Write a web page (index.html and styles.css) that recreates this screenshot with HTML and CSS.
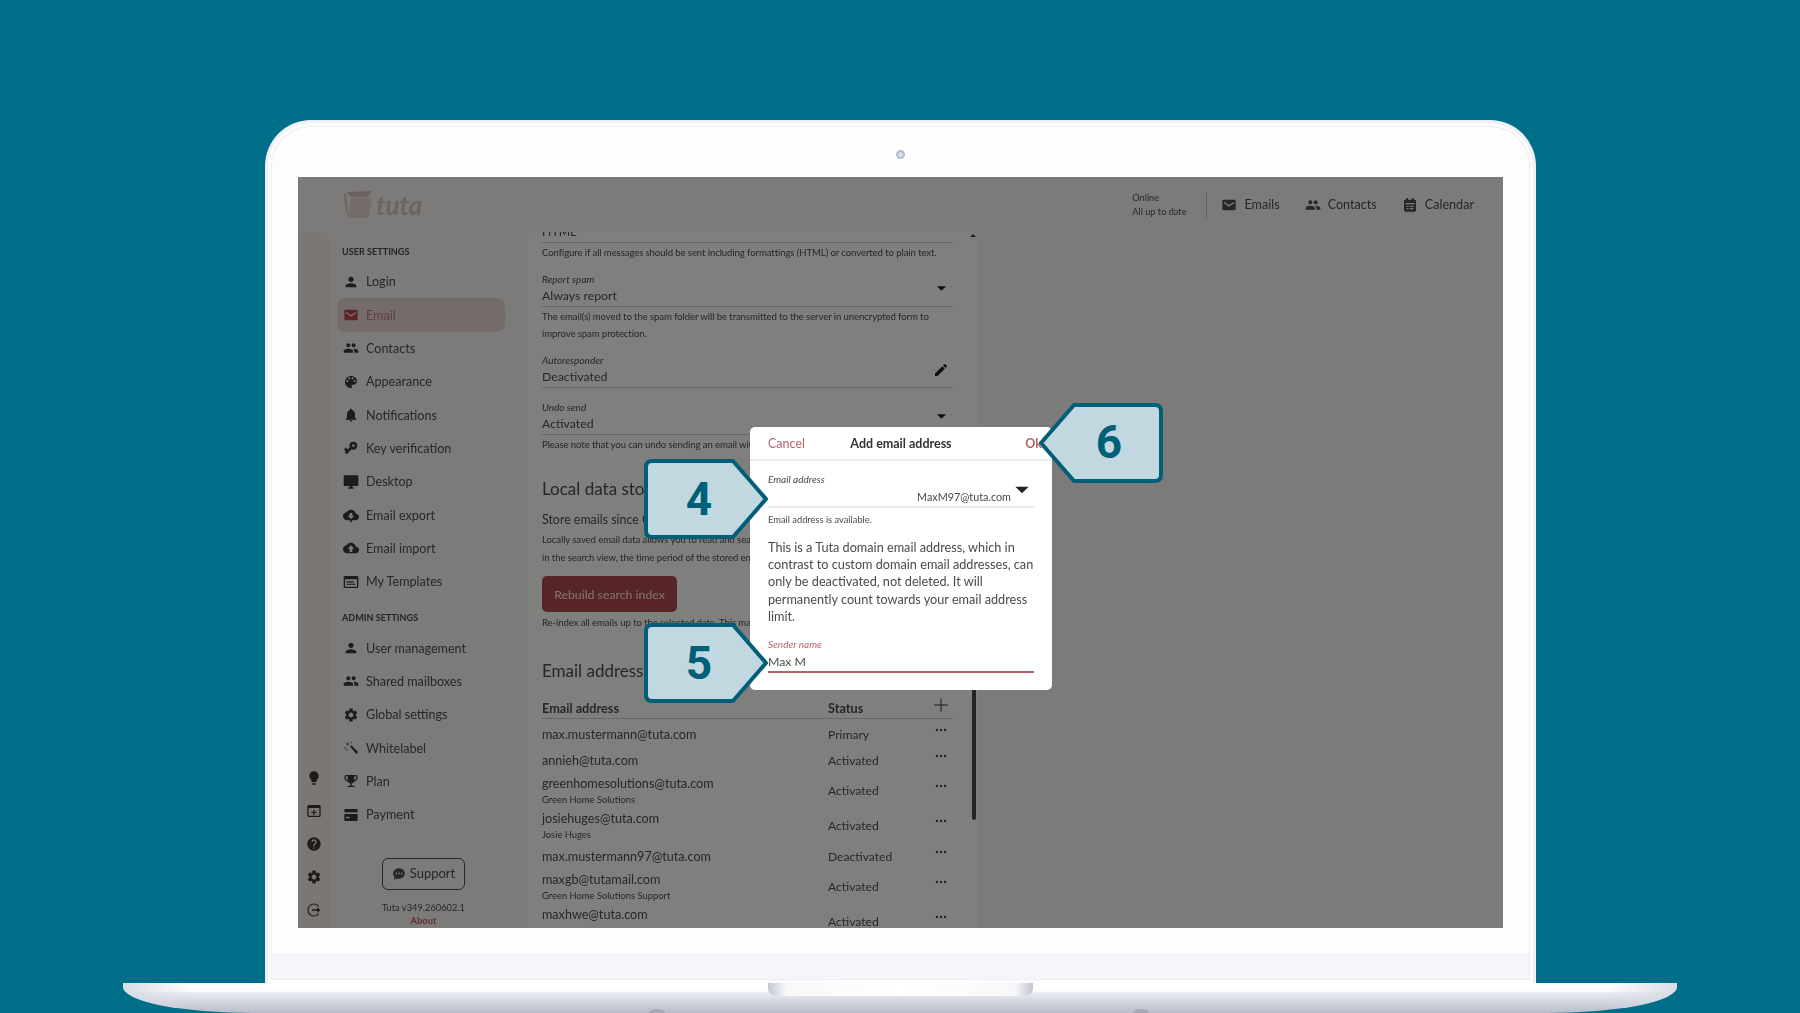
FILE: index.html
```html
<!DOCTYPE html>
<html lang="en">
<head>
    <meta charset="UTF-8">
    <meta name="viewport" content="width=device-width, initial-scale=1.0">
    <title>Add email address</title>
    <link rel="stylesheet" href="styles.css">
</head>
<body>

    <!-- icon sprite -->
    <svg class="sprite" width="0" height="0">
        <symbol id="i-person" viewBox="0 0 24 24"><path d="M12 12c2.21 0 4-1.79 4-4s-1.79-4-4-4-4 1.79-4 4 1.79 4 4 4zm0 2c-2.67 0-8 1.34-8 4v2h16v-2c0-2.66-5.33-4-8-4z"/></symbol>
        <symbol id="i-mail" viewBox="0 0 24 24"><path d="M4 4h16a2 2 0 0 1 2 2v12a2 2 0 0 1-2 2H4a2 2 0 0 1-2-2V6a2 2 0 0 1 2-2zm1.2 3.4L4 8.9l8 5.6 8-5.6-1.2-1.5L12 12.100z" fill-rule="evenodd"/></symbol>
        <symbol id="i-people" viewBox="0 0 24 24"><path d="M16 11c1.66 0 2.99-1.34 2.99-3S17.66 5 16 5c-1.66 0-3 1.34-3 3s1.34 3 3 3zm-8 0c1.66 0 2.99-1.34 2.99-3S9.66 5 8 5C6.34 5 5 6.34 5 8s1.34 3 3 3zm0 2c-2.33 0-7 1.17-7 3.5V19h14v-2.500c0-2.330-4.670-3.500-7-3.500zm8 0c-.29 0-.62.02-.97.05 1.160.84 1.970 1.970 1.970 3.450V19h6v-2.500c0-2.330-4.670-3.500-7-3.500z"/></symbol>
        <symbol id="i-palette" viewBox="0 0 24 24"><path d="M12 3c-4.970 0-9 4.030-9 9s4.030 9 9 9c.83 0 1.500-.67 1.500-1.500 0-.39-.15-.74-.39-1.010-.23-.26-.38-.61-.38-.99 0-.83.67-1.500 1.500-1.500H16c2.760 0 5-2.240 5-5 0-4.420-4.030-8-9-8zm-5.500 9c-.83 0-1.500-.67-1.500-1.500S5.670 9 6.500 9 8 9.670 8 10.500 7.330 12 6.500 12zm3-4C8.670 8 8 7.330 8 6.500S8.670 5 9.500 5s1.500.67 1.500 1.500S10.330 8 9.500 8zm5 0c-.83 0-1.500-.67-1.500-1.500S13.670 5 14.500 5s1.500.67 1.500 1.500S15.330 8 14.500 8zm3 4c-.83 0-1.500-.67-1.500-1.500S16.670 9 17.500 9s1.500.67 1.500 1.500-.67 1.500-1.500 1.500z"/></symbol>
        <symbol id="i-bell" viewBox="0 0 24 24"><path d="M12 22c1.100 0 2-.9 2-2h-4c0 1.100.89 2 2 2zm6-6v-5c0-3.070-1.640-5.640-4.500-6.320V4c0-.83-.67-1.500-1.500-1.500s-1.500.67-1.500 1.500v.68C7.630 5.360 6 7.920 6 11v5l-2 2v1h16v-1l-2-2z"/></symbol>
        <symbol id="i-key" viewBox="0 0 24 24"><path transform="rotate(135 12 12)" d="M12.650 10C11.830 7.670 9.610 6 7 6c-3.310 0-6 2.690-6 6s2.690 6 6 6c2.610 0 4.830-1.670 5.650-4H17v4h4v-4h2v-4H12.650zM7 14c-1.100 0-2-.9-2-2s.9-2 2-2 2 .9 2 2-.9 2-2 2z"/></symbol>
        <symbol id="i-desktop" viewBox="0 0 24 24"><path d="M21 2H3c-1.100 0-2 .9-2 2v12c0 1.100.9 2 2 2h7v2H8v2h8v-2h-2v-2h7c1.100 0 2-.9 2-2V4c0-1.100-.9-2-2-2z"/></symbol>
        <symbol id="i-cloud-down" viewBox="0 0 24 24"><path d="M19.350 10.040C18.670 6.590 15.640 4 12 4 9.110 4 6.600 5.640 5.350 8.040 2.340 8.360 0 10.910 0 14c0 3.310 2.690 6 6 6h4.800v3h2.400v-3H19c2.760 0 5-2.240 5-5 0-2.640-2.050-4.780-4.650-4.960zM17 13l-5 5-5-5h3V9h4v4h3z"/></symbol>
        <symbol id="i-cloud-up" viewBox="0 0 24 24"><path d="M19.350 10.040C18.670 6.590 15.640 4 12 4 9.110 4 6.600 5.640 5.350 8.040 2.340 8.360 0 10.910 0 14c0 3.310 2.690 6 6 6h13c2.760 0 5-2.240 5-5 0-2.640-2.050-4.780-4.650-4.960zM14 13v5h-4v-5H7l5-5 5 5h-3z"/></symbol>
        <symbol id="i-template" viewBox="0 0 24 24"><path d="M3 3h18a2 2 0 0 1 2 2v14a2 2 0 0 1-2 2H3a2 2 0 0 1-2-2V5a2 2 0 0 1 2-2zm0 5v11h18V8zm2 3h11v1.700H5zm0 3.500h14v1.700H5z" fill-rule="evenodd"/></symbol>
        <symbol id="i-gear" viewBox="0 0 24 24"><path d="M19.140 12.940c.04-.3.06-.61.06-.94 0-.32-.02-.64-.07-.94l2.030-1.580c.18-.14.23-.41.12-.61l-1.920-3.320c-.12-.22-.37-.29-.59-.22l-2.390.96c-.5-.38-1.030-.7-1.620-.94l-.36-2.540c-.04-.24-.24-.41-.48-.41h-3.840c-.24 0-.43.17-.47.41l-.36 2.540c-.59.24-1.130.57-1.620.94l-2.390-.96c-.22-.08-.47 0-.59.22L2.740 8.870c-.12.21-.08.47.12.61l2.030 1.580c-.05.3-.09.63-.09.94s.02.64.07.94l-2.030 1.580c-.18.14-.23.41-.12.61l1.920 3.320c.12.22.37.29.59.22l2.390-.96c.5.38 1.030.7 1.620.94l.36 2.540c.05.24.24.41.48.41h3.840c.24 0 .44-.17.47-.41l.36-2.540c.59-.24 1.130-.56 1.620-.94l2.390.96c.22.08.47 0 .59-.22l1.920-3.320c.12-.22.07-.47-.12-.61l-2.010-1.580zM12 15.600c-1.980 0-3.600-1.620-3.600-3.600s1.620-3.600 3.600-3.600 3.600 1.620 3.600 3.600-1.620 3.600-3.600 3.600z"/></symbol>
        <symbol id="i-wand" viewBox="0 0 24 24"><path d="M10.500 9.600l1.900-1.900 10.300 10.300-2.800 2.900zM7 3l.7 2.300L10 6l-2.300.7L7 9l-.7-2.300L4 6l2.300-.7zM3 10l.5 1.500L5 12l-1.500.5L3 14l-.5-1.500L1 12l1.500-.5zM12 2l.4 1.600L14 4l-1.600.4L12 6l-.4-1.600L10 4l1.600-.4zM6 13l.4 1.600L8 15l-1.600.4L6 17l-.4-1.600L4 15l1.600-.4z"/></symbol>
        <symbol id="i-trophy" viewBox="0 0 24 24"><path d="M19 3H5a3 3 0 0 0-3 3v1c0 3 2.200 5.500 5.200 5.900.7 1.600 2.100 2.700 3.800 3V19H7v2h10v-2h-4v-3.100c1.700-.3 3.100-1.400 3.800-3C19.800 12.500 22 10 22 7V6a3 3 0 0 0-3-3zM4 7V5h3v6a4 4 0 0 1-3-4zm16 0a4 4 0 0 1-3 4V5h3z"/></symbol>
        <symbol id="i-card" viewBox="0 0 24 24"><path d="M4 3h16a2 2 0 0 1 2 2v3H2V5a2 2 0 0 1 2-2zM2 10.500h20V19a2 2 0 0 1-2 2H4a2 2 0 0 1-2-2zm2.500 4V17H10v-2.500z" fill-rule="evenodd"/></symbol>
        <symbol id="i-bulb" viewBox="0 0 24 24"><path d="M9 21c0 .55.45 1 1 1h4c.55 0 1-.45 1-1v-1H9v1zm3-19C8.140 2 5 5.140 5 9c0 2.380 1.190 4.470 3 5.740V17c0 .55.45 1 1 1h6c.55 0 1-.45 1-1v-2.260c1.810-1.270 3-3.360 3-5.740 0-3.860-3.140-7-7-7z"/></symbol>
        <symbol id="i-newwin" viewBox="0 0 24 24"><path d="M4 3h16a2 2 0 0 1 2 2v14a2 2 0 0 1-2 2H4a2 2 0 0 1-2-2V5a2 2 0 0 1 2-2zm0 4.500V19h16V7.500zM11 10h2v3h3v2h-3v3h-2v-3H8v-2h3z" fill-rule="evenodd"/></symbol>
        <symbol id="i-help" viewBox="0 0 24 24"><path d="M12 2C6.480 2 2 6.480 2 12s4.480 10 10 10 10-4.480 10-10S17.520 2 12 2zm1 17h-2v-2h2v2zm2.070-7.750l-.9.92C13.450 12.900 13 13.500 13 15h-2v-.5c0-1.100.45-2.100 1.170-2.830l1.240-1.260c.37-.36.59-.86.59-1.410 0-1.100-.9-2-2-2s-2 .9-2 2H8c0-2.210 1.790-4 4-4s4 1.790 4 4c0 .88-.36 1.680-.93 2.250z"/></symbol>
        <symbol id="i-logout" viewBox="0 0 24 24"><path d="M19 6.500A9 9 0 1 0 19 17.500" fill="none" stroke="currentColor" stroke-width="1.800"/><path d="M9 11h8V8l4.500 4-4.500 4v-3H9z"/></symbol>
        <symbol id="i-chat" viewBox="0 0 24 24"><path d="M12 2C6.500 2 2 5.900 2 11c0 2.300 1 4.400 2.500 6L3 22l6-2.400c1 .3 2 .4 3 .4 5.500 0 10-4 10-9s-4.500-9-10-9zM7.500 9.500a1.500 1.500 0 1 1 0 3 1.500 1.500 0 0 1 0-3zm4.500 0a1.500 1.500 0 1 1 0 3 1.500 1.500 0 0 1 0-3zm4.500 0a1.500 1.500 0 1 1 0 3 1.500 1.500 0 0 1 0-3z" fill-rule="evenodd"/></symbol>
        <symbol id="i-calendar" viewBox="0 0 24 24"><path d="M5 4h1V2h3v2h6V2h3v2h1a2 2 0 0 1 2 2v14a2 2 0 0 1-2 2H5a2 2 0 0 1-2-2V6a2 2 0 0 1 2-2zm0 5v2h14V9zm2 4v2h3v-2zm5 0v2h5v-2zm-5 3.500v2h3v-2zm5 0v2h5v-2z" fill-rule="evenodd"/></symbol>
        <symbol id="i-pencil" viewBox="0 0 24 24"><path d="M3 17.250V21h3.750L17.810 9.940l-3.750-3.750L3 17.250zM20.710 7.040c.39-.39.39-1.020 0-1.410l-2.340-2.340c-.39-.39-1.020-.39-1.410 0l-1.830 1.830 3.750 3.750 1.830-1.830z"/></symbol>
        <symbol id="i-plus" viewBox="0 0 24 24"><path d="M20 12.600h-7.400V20h-1.200v-7.400H4v-1.200h7.400V4h1.200v7.400H20z"/></symbol>
        <symbol id="i-more" viewBox="0 0 24 24"><circle cx="5" cy="12" r="2"/><circle cx="12" cy="12" r="2"/><circle cx="19" cy="12" r="2"/></symbol>
        <symbol id="i-caret" viewBox="0 0 24 24"><path d="M2 7h20L12 17z"/></symbol>
    </svg>

    <div class="stage">
        <div class="lid">
            <div class="webcam"></div>

            <div class="screen">
                <div class="app">
                    <header class="topbar">
                        <div class="logo">
                            <svg class="logo-box" viewBox="0 0 28 28">
                                <path d="M3 1l25-1-4 6H6z" fill="#d4c5c2"/>
                                <path d="M0 2l2 1 2 23-2-6z" fill="#ccbfbc"/>
                                <path d="M7 7h21l-3.500 20H3.500z" fill="#e6d8d5"/>
                            </svg>
                            <span class="logo-text">tuta</span>
                        </div>
                        <div class="sync">
                            <div>Online</div>
                            <div>All up to date</div>
                        </div>
                        <nav class="apps">
                            <a class="app-link"><svg class="icon"><use href="#i-mail"/></svg>Emails</a>
                            <a class="app-link"><svg class="icon"><use href="#i-people"/></svg>Contacts</a>
                            <a class="app-link"><svg class="icon"><use href="#i-calendar"/></svg>Calendar</a>
                        </nav>
                    </header>

                    <div class="main">
                        <aside class="rail">
                            <svg class="icon"><use href="#i-bulb"/></svg>
                            <svg class="icon"><use href="#i-newwin"/></svg>
                            <svg class="icon"><use href="#i-help"/></svg>
                            <svg class="icon"><use href="#i-gear"/></svg>
                            <svg class="icon"><use href="#i-logout"/></svg>
                        </aside>

                        <aside class="nav">
                            <div class="nav-title">USER SETTINGS</div>
                            <a class="nav-item"><svg class="icon"><use href="#i-person"/></svg>Login</a>
                            <a class="nav-item active"><svg class="icon"><use href="#i-mail"/></svg>Email</a>
                            <a class="nav-item"><svg class="icon"><use href="#i-people"/></svg>Contacts</a>
                            <a class="nav-item"><svg class="icon"><use href="#i-palette"/></svg>Appearance</a>
                            <a class="nav-item"><svg class="icon"><use href="#i-bell"/></svg>Notifications</a>
                            <a class="nav-item"><svg class="icon"><use href="#i-key"/></svg>Key verification</a>
                            <a class="nav-item"><svg class="icon"><use href="#i-desktop"/></svg>Desktop</a>
                            <a class="nav-item"><svg class="icon"><use href="#i-cloud-down"/></svg>Email export</a>
                            <a class="nav-item"><svg class="icon"><use href="#i-cloud-up"/></svg>Email import</a>
                            <a class="nav-item"><svg class="icon"><use href="#i-template"/></svg>My Templates</a>
                            <div class="nav-title admin">ADMIN SETTINGS</div>
                            <a class="nav-item"><svg class="icon"><use href="#i-person"/></svg>User management</a>
                            <a class="nav-item"><svg class="icon"><use href="#i-people"/></svg>Shared mailboxes</a>
                            <a class="nav-item"><svg class="icon"><use href="#i-gear"/></svg>Global settings</a>
                            <a class="nav-item"><svg class="icon"><use href="#i-wand"/></svg>Whitelabel</a>
                            <a class="nav-item"><svg class="icon"><use href="#i-trophy"/></svg>Plan</a>
                            <a class="nav-item"><svg class="icon"><use href="#i-card"/></svg>Payment</a>
                            <div class="nav-foot">
                                <button class="support"><svg class="icon"><use href="#i-chat"/></svg><span>Support</span></button>
                                <div class="version">Tuta v349.260602.1</div>
                                <div class="about">About</div>
                            </div>
                        </aside>

                        <section class="card">
                            <div class="card-inner">
                                <div class="field">
                                    <div class="field-label">&nbsp;</div>
                                    <div class="field-value">HTML</div>
                                </div>
                                <p class="help">Configure if all messages should be sent including formattings (HTML) or converted to plain text.</p>

                                <div class="field gap">
                                    <div class="field-label">Report spam</div>
                                    <div class="field-value">Always report<svg class="caret"><use href="#i-caret"/></svg></div>
                                </div>
                                <p class="help">The email(s) moved to the spam folder will be transmitted to the server in unencrypted form to<br>improve spam protection.</p>

                                <div class="field gap">
                                    <div class="field-label">Autoresponder</div>
                                    <div class="field-value">Deactivated<svg class="pencil"><use href="#i-pencil"/></svg></div>
                                </div>

                                <div class="field gap-lg">
                                    <div class="field-label">Undo send</div>
                                    <div class="field-value">Activated<svg class="caret"><use href="#i-caret"/></svg></div>
                                </div>
                                <p class="help">Please note that you can undo sending an email within the selected time.</p>

                                <h2 class="heading">Local data storage</h2>
                                <div class="plain-value">Store emails since October</div>
                                <p class="help">Locally saved email data allows you to read and search offline emails<br>in the search view, the time period of the stored emails can be set.</p>
                                <button class="rebuild">Rebuild search index</button>
                                <p class="help">Re-index all emails up to the selected date. This may take a while.</p>

                                <h2 class="heading addr-heading">Email addresses</h2>
                                <div class="addr-table">
                                    <div class="addr-row addr-head">
                                        <div>Email address</div>
                                        <div>Status</div>
                                        <svg class="plus"><use href="#i-plus"/></svg>
                                    </div>
                                    <div class="addr-row">
                                        <div>max.mustermann@tuta.com</div>
                                        <div>Primary</div>
                                        <svg class="more"><use href="#i-more"/></svg>
                                    </div>
                                    <div class="addr-row">
                                        <div>annieh@tuta.com</div>
                                        <div>Activated</div>
                                        <svg class="more"><use href="#i-more"/></svg>
                                    </div>
                                    <div class="addr-row tall">
                                        <div>greenhomesolutions@tuta.com<small>Green Home Solutions</small></div>
                                        <div>Activated</div>
                                        <svg class="more"><use href="#i-more"/></svg>
                                    </div>
                                    <div class="addr-row tall">
                                        <div>josiehuges@tuta.com<small>Josie Huges</small></div>
                                        <div>Activated</div>
                                        <svg class="more"><use href="#i-more"/></svg>
                                    </div>
                                    <div class="addr-row">
                                        <div>max.mustermann97@tuta.com</div>
                                        <div>Deactivated</div>
                                        <svg class="more"><use href="#i-more"/></svg>
                                    </div>
                                    <div class="addr-row tall">
                                        <div>maxgb@tutamail.com<small>Green Home Solutions Support</small></div>
                                        <div>Activated</div>
                                        <svg class="more"><use href="#i-more"/></svg>
                                    </div>
                                    <div class="addr-row tall">
                                        <div>maxhwe@tuta.com<small>&nbsp;</small></div>
                                        <div>Activated</div>
                                        <svg class="more"><use href="#i-more"/></svg>
                                    </div>
                                </div>
                            </div>
                            <div class="scroll-arrow"></div>
                            <div class="scroll-thumb"></div>
                        </section>
                    </div>
                </div>

                <div class="dim"></div>

                <div class="modal">
                    <div class="modal-head">
                        <a class="modal-btn">Cancel</a>
                        <div class="modal-title">Add email address</div>
                        <a class="modal-btn ok">Ok</a>
                    </div>
                    <div class="modal-body">
                        <div class="modal-label">Email address</div>
                        <div class="modal-select">MaxM97@tuta.com<svg class="modal-caret"><use href="#i-caret"/></svg></div>
                        <div class="modal-note">Email address is available.</div>
                        <p class="modal-text">This is a Tuta domain email address, which in<br>contrast to custom domain email addresses, can<br>only be deactivated, not deleted. It will<br>permanently count towards your email address<br>limit.</p>
                        <div class="modal-label focus">Sender name</div>
                        <div class="modal-input">Max M</div>
                    </div>
                </div>

                <div class="callout c4">
                    <svg viewBox="0 0 124 80"><path d="M8 2H89L122 40 89 78H8Q2 78 2 72V8Q2 2 8 2Z"/></svg>
                    <span>4</span>
                </div>
                <div class="callout c5">
                    <svg viewBox="0 0 124 80"><path d="M8 2H89L122 40 89 78H8Q2 78 2 72V8Q2 2 8 2Z"/></svg>
                    <span>5</span>
                </div>
                <div class="callout c6">
                    <svg viewBox="0 0 124 80"><path d="M8 2H89L122 40 89 78H8Q2 78 2 72V8Q2 2 8 2Z"/></svg>
                    <span>6</span>
                </div>
            </div>
        </div>

        <div class="base">
            <div class="notch"></div>
            <div class="foot left"></div>
            <div class="foot right"></div>
        </div>
    </div>

</body>
</html>
```

FILE: styles.css
```css
html, body {
    margin: 0;
    height: 100%;
}

body {
    background-color: #006e89;
    font-family: Lato, "Noto Sans", sans-serif;
    overflow: hidden;
}

.sprite {
    position: absolute;
}

.icon {
    width: 16px;
    height: 16px;
    fill: currentColor;
    flex: none;
}

p {
    margin: 0;
}

a {
    display: block;
}

/* laptop frame */
.stage {
    height: 1013px;
    display: flex;
    flex-direction: column;
    align-items: center;
    padding-top: 120px;
    box-sizing: border-box;
    overflow: hidden;
}

.lid {
    width: 1271px;
    height: 863px;
    margin-left: 1px;
    box-sizing: border-box;
    flex: none;
    position: relative;
    padding: 54px 30px 0;
    border: 3px solid #eff0f6;
    border-bottom: none;
    border-radius: 46px 46px 0 0;
    background: linear-gradient(#fdfdfd 0, #fdfdfd 830px, #f5f5fa 830px);
    box-shadow: inset 0 0 0 3px #fdfdfd, inset 0 0 0 4px #eceef3;
}

.webcam {
    position: absolute;
    left: 628px;
    top: 27px;
    width: 9px;
    height: 9px;
    box-sizing: border-box;
    border-radius: 50%;
    background: #d8dce8;
    border: 2px solid #b4bbd0;
}

.screen {
    width: 1205px;
    height: 751px;
    position: relative;
    overflow: hidden;
}

.base {
    width: 1554px;
    height: 30px;
    flex: none;
    position: relative;
    border-radius: 0 0 130px 130px / 0 0 26px 26px;
    background:
        linear-gradient(90deg, #d9dce5 0, rgba(255, 255, 255, 0) 70px, rgba(255, 255, 255, 0) 1484px, #d9dce5 100%),
        linear-gradient(#ffffff 0, #fdfdfe 8px, #e9ebf0 10px, #d5d8e1 18px, #b9bdcb 100%);
}

.notch {
    width: 265px;
    height: 13px;
    margin-left: 645px;
    border-radius: 0 0 8px 8px;
    background: linear-gradient(90deg, #c3c6d0 0, #f8f8fb 7%, #ffffff 50%, #f8f8fb 93%, #c3c6d0 100%);
}

.foot {
    position: absolute;
    bottom: -3px;
    width: 16px;
    height: 7px;
    border-radius: 50%;
    background: #a4a9b8;
}

.foot.left {
    left: 526px;
}

.foot.right {
    left: 1010px;
}

/* app under the dialog */
.app {
    height: 100%;
    display: flex;
    flex-direction: column;
    background-color: #f8f6f2;
    color: #504e4c;
    filter: blur(0.45px);
}

.dim {
    position: absolute;
    inset: 0;
    background-color: rgba(0, 0, 0, 0.5);
}

.topbar {
    height: 55px;
    flex: none;
    display: flex;
    align-items: center;
    padding: 0 29px 0 46px;
}

.logo {
    display: flex;
    align-items: center;
    gap: 4px;
    color: #d4c8c4;
}

.logo-box {
    width: 28px;
    height: 28px;
}

.logo-text {
    font-style: italic;
    font-weight: 700;
    font-size: 26px;
    line-height: 26px;
}

.sync {
    margin-left: auto;
    padding-right: 20px;
    border-right: 1px solid #c8c6c2;
    font-size: 9.2px;
    line-height: 14px;
}

.apps {
    display: flex;
    align-items: center;
    font-size: 12.6px;
}

.app-link {
    display: flex;
    align-items: center;
    gap: 7px;
    margin-left: 14px;
    margin-right: 11px;
}

.app-link:last-child {
    margin-right: 0;
}

.main {
    flex: 1;
    min-height: 0;
    display: flex;
}

.rail {
    width: 32px;
    flex: none;
    display: flex;
    flex-direction: column;
    justify-content: flex-end;
    align-items: center;
    gap: 17px;
    padding: 0 0 10px;
    box-sizing: border-box;
    background-color: #f6eeea;
    border-top-right-radius: 8px;
    color: #3a3836;
}

.nav {
    width: 197px;
    flex: none;
    display: flex;
    flex-direction: column;
    padding: 12px 22px 0 7px;
    box-sizing: border-box;
}

.nav-title {
    height: 16px;
    line-height: 16px;
    margin: 0 0 5px 5px;
    font-size: 9.1px;
    font-weight: 700;
    color: #4a4846;
}

.nav-title.admin {
    margin-top: 12px;
}

.nav-item {
    height: 33.35px;
    flex: none;
    display: flex;
    align-items: center;
    gap: 7px;
    padding-left: 6px;
    border-radius: 8px;
    font-size: 12.6px;
}

.nav-item .icon {
    color: #3a3836;
}

.nav-item.active {
    background-color: #e8d8d6;
    color: #c87a7c;
}

.nav-item.active .icon {
    color: #c04448;
}

.nav-foot {
    margin-top: auto;
    padding: 0 0 1px 5px;
    display: flex;
    flex-direction: column;
    align-items: center;
    font-size: 9.3px;
    line-height: 13px;
}

.support {
    width: 83px;
    height: 32px;
    margin-bottom: 11px;
    display: flex;
    align-items: center;
    justify-content: center;
    gap: 4px;
    padding: 0 0 2px;
    font-family: inherit;
    font-size: 13px;
    color: inherit;
    background: none;
    border: 1px solid #504e4c;
    border-radius: 6px;
}

.support .icon {
    width: 14px;
    height: 14px;
    margin-top: 2px;
}

.about {
    font-weight: 700;
    color: #c8606a;
}

.card {
    width: 451px;
    flex: none;
    position: relative;
    overflow: hidden;
    background-color: #fffefb;
    border-radius: 8px 8px 0 0;
}

.card-inner {
    width: 411px;
    margin: -24px 0 0 15px;
}

.field {
    height: 35px;
    box-sizing: border-box;
    border-bottom: 1px solid #d2d0cc;
}

.field.gap {
    margin-top: 10px;
}

.field.gap-lg {
    margin-top: 12px;
}

.field-label {
    height: 14px;
    line-height: 14px;
    font-size: 10px;
    font-style: italic;
}

.field-value {
    height: 20px;
    display: flex;
    align-items: center;
    justify-content: space-between;
    font-size: 12.3px;
    line-height: 20px;
}

.caret {
    width: 11px;
    height: 11px;
    margin: -14px 6px 0 0;
    fill: #222;
}

.pencil {
    width: 16px;
    height: 16px;
    margin: -14px 4px 0 0;
    fill: #222;
}

.help {
    padding-top: 1px;
    font-size: 9.6px;
    letter-spacing: -0.1px;
    line-height: 17.5px;
    white-space: nowrap;
}

.heading {
    margin: 24px 0 0;
    font-size: 17px;
    line-height: 24px;
    font-weight: 400;
}

.plain-value {
    margin-top: 9px;
    font-size: 12.4px;
    line-height: 20px;
}

.rebuild {
    display: block;
    width: 135px;
    height: 36px;
    margin: 10px 0 1px;
    padding: 0;
    border: none;
    border-radius: 5px;
    background-color: #b04a4c;
    font-family: inherit;
    font-size: 12.3px;
    color: #ffe8e4;
}

.addr-heading {
    margin-top: 27px;
}

.addr-table {
    margin-top: 16px;
}

.addr-row {
    display: grid;
    grid-template-columns: 286px 1fr 24px;
    align-items: center;
    height: 24px;
    margin-bottom: 2px;
    font-size: 12.6px;
    line-height: 18px;
}

.addr-row > div:nth-child(2) {
    font-size: 12.1px;
}

.addr-row.tall {
    height: 33px;
}

.addr-row small {
    display: block;
    font-size: 9.4px;
    line-height: 14px;
}

.addr-head {
    height: 19px;
    margin-bottom: 4px;
    border-bottom: 1px solid #d2d0cc;
    font-weight: 700;
}

.addr-row.addr-head > div {
    font-size: 12.7px;
}

.plus {
    width: 20px;
    height: 20px;
    margin: -7px 0 0 2px;
    fill: #3a3836;
}

.more {
    width: 14px;
    height: 14px;
    margin: -10px 0 0 5px;
    fill: #3a3836;
}

.scroll-thumb {
    position: absolute;
    right: 2px;
    top: 440px;
    width: 4px;
    height: 148px;
    border-radius: 2px;
    background-color: #4a4846;
}

.scroll-arrow {
    position: absolute;
    right: 2px;
    top: 2px;
    width: 0;
    height: 0;
    border: 3px solid transparent;
    border-top: none;
    border-bottom-color: #3a3836;
}

/* dialog */
.modal {
    position: absolute;
    left: 452px;
    top: 250px;
    width: 302px;
    height: 263px;
    background-color: #ffffff;
    border-radius: 5px;
    color: #4a4a4a;
    filter: blur(0.3px);
}

.modal-head {
    height: 32px;
    padding: 0 10px 0 18px;
    display: grid;
    grid-template-columns: 1fr auto 1fr;
    align-items: center;
    border-bottom: 2px solid #ebebeb;
    font-size: 12.5px;
}

.modal-btn {
    color: #b8636a;
}

.modal-btn.ok {
    font-weight: 700;
    justify-self: end;
}

.modal-title {
    font-weight: 700;
    color: #333;
    margin-left: -8px;
}

.modal-body {
    padding: 11px 18px 0;
}

.modal-label {
    height: 14px;
    line-height: 14px;
    font-size: 10px;
    font-style: italic;
}

.modal-label.focus {
    margin-top: 12px;
    color: #b8636a;
}

.modal-select {
    height: 20px;
    display: flex;
    align-items: center;
    justify-content: flex-end;
    gap: 3px;
    padding-right: 4px;
    border-bottom: 2px solid #ebebeb;
    font-size: 10.8px;
}

.modal-caret {
    width: 16px;
    height: 16px;
    margin-top: -12px;
    fill: #222;
}

.modal-note {
    margin-top: 4px;
    font-size: 9.3px;
    line-height: 16px;
}

.modal-text {
    margin-top: 11px;
    font-size: 12.7px;
    line-height: 17.2px;
    white-space: nowrap;
}

.modal-input {
    height: 20px;
    line-height: 22px;
    border-bottom: 2px solid #b8636a;
    font-size: 12.3px;
}

/* numbered markers */
.callout {
    position: absolute;
    width: 124px;
    height: 80px;
    display: flex;
    align-items: center;
}

.callout svg {
    position: absolute;
    inset: 0;
    fill: #c2d8e0;
    stroke: #005f78;
    stroke-width: 4;
    stroke-linejoin: round;
}

.callout span {
    position: relative;
    width: 110px;
    text-align: center;
    font-family: Roboto, sans-serif;
    font-weight: 700;
    font-size: 46px;
    line-height: 80px;
    color: #005f78;
}

.c4 {
    left: 346px;
    top: 282px;
}

.c5 {
    left: 346px;
    top: 446px;
}

.c6 {
    left: 741px;
    top: 226px;
    padding-left: 16px;
    box-sizing: border-box;
}

.c6 span {
    margin-top: -2px;
}

.c6 svg {
    transform: scaleX(-1);
}
```
